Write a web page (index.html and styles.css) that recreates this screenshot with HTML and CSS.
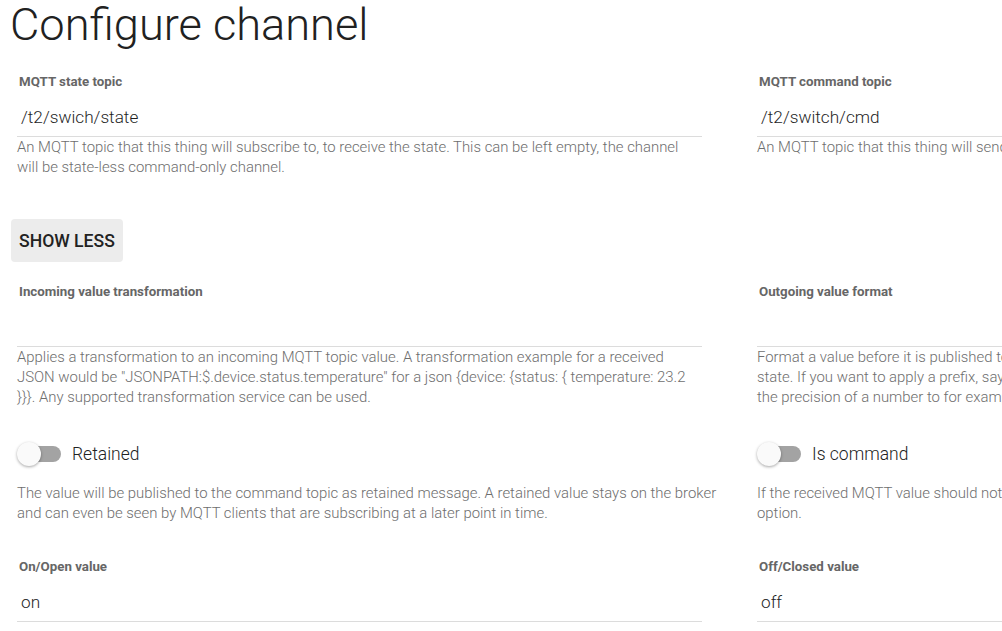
FILE: index.html
```html
<!DOCTYPE html>
<html>
<head>
<meta charset="utf-8">
<link rel="stylesheet" href="styles.css">
</head>
<body>
<h1 class="title">Configure channel</h1>
<div class="grid">
  <div class="field row1">
    <div class="label">MQTT state topic</div>
    <div class="input">/t2/swich/state</div>
    <div class="help">An MQTT topic that this thing will subscribe to, to receive the state. This can be left empty, the channel will be state-less command-only channel.</div>
  </div>
  <div class="field row1">
    <div class="label">MQTT command topic</div>
    <div class="input">/t2/switch/cmd</div>
    <div class="help">An MQTT topic that this thing will send a command to. If not given, this channel will be read-only.</div>
  </div>

  <div class="btn-cell"><button class="btn">SHOW LESS</button></div>
  <div class="btn-cell"></div>

  <div class="field row3">
    <div class="label">Incoming value transformation</div>
    <div class="input"></div>
    <div class="help">Applies a transformation to an incoming MQTT topic value. A transformation example for a received JSON would be "JSONPATH:$.device.status.temperature" for a json {device: {status: { temperature: 23.2 }}}. Any supported transformation service can be used.</div>
  </div>
  <div class="field row3">
    <div class="label">Outgoing value format</div>
    <div class="input"></div>
    <div class="help">Format a value before it is published to the MQTT broker. The default is to just pass the channel/item state. If you want to apply a prefix, say "MYCOLOR,", you would use "MYCOLOR,%s". If you want to adjust the precision of a number to for example 4 digits, you would use "%.4f".</div>
  </div>

  <div class="toggle-cell">
    <div class="toggle-row">
      <span class="switch"><span class="track"></span><span class="thumb"></span></span>
      <span class="toggle-text">Retained</span>
    </div>
    <div class="help">The value will be published to the command topic as retained message. A retained value stays on the broker and can even be seen by MQTT clients that are subscribing at a later point in time.</div>
  </div>
  <div class="toggle-cell">
    <div class="toggle-row">
      <span class="switch"><span class="track"></span><span class="thumb"></span></span>
      <span class="toggle-text">Is command</span>
    </div>
    <div class="help">If the received MQTT value should not only update the state of linked items, but command them, enable this option.</div>
  </div>

  <div class="field row5">
    <div class="label">On/Open value</div>
    <div class="input">on</div>
  </div>
  <div class="field row5">
    <div class="label">Off/Closed value</div>
    <div class="input">off</div>
  </div>
</div>
</body>
</html>
```

FILE: styles.css
```css
html, body {
  margin: 0;
  padding: 0;
  overflow: hidden;
  background: #ffffff;
}

body {
  font-family: Roboto, "Liberation Sans", sans-serif;
  color: #222222;
  width: 1500px;
}

.title {
  margin: 0;
  padding-left: 10px;
  font-size: 45.2px;
  font-weight: 300;
  line-height: 50px;
  color: #212121;
}

.grid {
  display: grid;
  grid-template-columns: 720px 720px;
  column-gap: 20px;
  margin-left: 17px;
}

.field {
  width: 685px;
}

.row1 { margin-top: 24px; }
.row3 { margin-top: 21.5px; }
.row5 { margin-top: 35.5px; }

.label {
  padding-left: 2px;
  font-size: 13.3px;
  line-height: 16px;
  font-weight: 700;
  color: #666666;
}

.input {
  margin-top: 17px;
  padding: 0 0 8px 4px;
  height: 21px;
  font-size: 17.2px;
  line-height: 21px;
  font-weight: 300;
  color: #1e1e1e;
  border-bottom: 1px solid #dcdcdc;
}

.help {
  font-size: 14.9px;
  line-height: 20px;
  font-weight: 300;
  color: #6e6e6e;
}

.btn-cell {
  margin-top: 42px;
}

.btn {
  margin-left: -6px;
  height: 43px;
  padding: 0 8px;
  border: none;
  border-radius: 4px;
  background: #ececec;
  font-family: Roboto, "Liberation Sans", sans-serif;
  font-size: 17.6px;
  font-weight: 500;
  color: #222222;
}

.toggle-cell {
  margin-top: 23.5px;
  padding-right: 10px;
}

.toggle-row {
  display: flex;
  align-items: center;
  height: 48px;
  margin-bottom: 5px;
}

.switch {
  position: relative;
  display: inline-block;
  width: 44px;
  height: 24px;
}

.track {
  position: absolute;
  left: 2px;
  top: 4px;
  width: 42px;
  height: 16px;
  border-radius: 8px;
  background: #a3a3a3;
}

.thumb {
  position: absolute;
  left: 0;
  top: 0;
  width: 24px;
  height: 24px;
  border-radius: 50%;
  background: #fafafa;
  box-shadow: 0 1px 3px rgba(0, 0, 0, 0.35);
}

.toggle-text {
  margin-left: 11px;
  font-size: 17.5px;
  font-weight: 300;
  color: #222222;
}
```
